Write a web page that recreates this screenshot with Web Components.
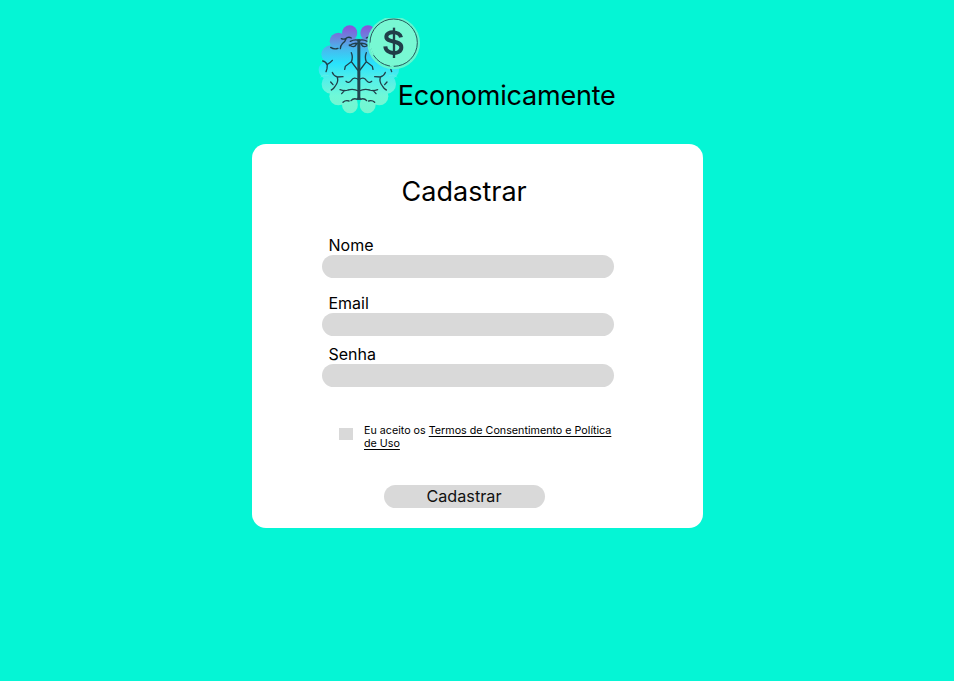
<!DOCTYPE html>
<html lang="pt-BR">
<head>
<meta charset="utf-8">
<title>Economicamente</title>
<style>
html,body{margin:0;height:100%;background:#05f5d5}
body{font-family:Inter,"Liberation Sans",sans-serif;color:#000;overflow:hidden}
</style>
</head>
<body>
<signup-page></signup-page>
<script>
const define = (name, html) => customElements.define(name, class extends HTMLElement {
  constructor() {
    super();
    const t = document.createElement('template');
    t.innerHTML = html;
    this.attachShadow({mode: 'open'}).append(t.content.cloneNode(true));
  }
});

define('brain-logo', `
<style>:host{display:block;width:120px;height:110px}svg{display:block}</style>
<svg width="120" height="110" viewBox="0 0 360 330" aria-hidden="true">
  <defs>
    <linearGradient id="g" gradientUnits="userSpaceOnUse" x1="0" y1="46" x2="0" y2="310">
      <stop offset="0" stop-color="#8b50dc"/><stop offset=".14" stop-color="#6a86dc"/>
      <stop offset=".27" stop-color="#48b9ee"/><stop offset=".43" stop-color="#28e2fc"/>
      <stop offset=".6" stop-color="#50eeea"/><stop offset=".8" stop-color="#70f8d8"/><stop offset="1" stop-color="#74f6cf"/>
    </linearGradient>
    <clipPath id="c"><rect x="160" y="24" width="190" height="170"/></clipPath>
    <g id="lobes">
      <path d="M146 86L120 85L92 98L58 130L52 180L64 220L88 256L120 275L146 268Z"/>
      <ellipse cx="119" cy="69" rx="23" ry="23"/><circle cx="85" cy="94" r="26"/>
      <ellipse cx="63" cy="133" rx="29" ry="27"/><ellipse cx="52" cy="180" rx="26" ry="26"/>
      <ellipse cx="62" cy="222" rx="27" ry="29"/><ellipse cx="85" cy="259" rx="27" ry="27"/>
      <ellipse cx="120" cy="284" rx="24" ry="26"/>
    </g>
    <g id="seams" stroke="#70f7de" stroke-width="2" opacity=".65">
      <path d="M34 150Q39 160 53 162M31 202Q42 191 56 197M57 245Q56 234 69 230M96 281Q95 270 109 263"/>
    </g>
    <g id="folds" stroke="#203e49" stroke-width="4" stroke-linecap="round">
      <path d="M146 91Q134 87 121 94M145 101Q132 97 118 107M118 105Q132 116 139 103M94 86Q102 90 111 83Q118 80 124 84M109 85Q105 97 97 101Q91 107 91 116M62 112Q72 119 84 115"/>
      <path d="M124 128Q130 142 124 155L106 169L104 178M124 155L143 180M38 153Q48 155 51 164M67 151Q61 158 52 163L51 176L48 185"/>
      <path d="M67 187Q70 197 82 201L99 200M82 201Q86 217 75 229Q70 238 64 240M62 216L69 224M108 214Q116 222 124 211Q132 199 146 209M90 239Q104 244 114 240Q130 235 146 243M104 241L95 251M99 277Q106 270 117 273M123 272Q130 263 143 268"/>
    </g>
  </defs>
  <g fill="url(#g)"><use href="#lobes"/><use href="#lobes" transform="translate(293 0) scale(-1 1)"/></g>
  <path d="M146 45V86M146 273V310" stroke="#05f5d5" stroke-width="5"/>
  <g fill="none"><use href="#seams"/><use href="#seams" transform="translate(293 0) scale(-1 1)"/><use href="#folds"/><use href="#folds" transform="translate(293 0) scale(-1 1)"/></g>
  <path d="M142 88H151V262L155 270H139L142 262Z" fill="#204650"/>
  <g clip-path="url(#c)">
    <circle cx="251" cy="99" r="79" fill="#64f5cf"/>
    <circle cx="251" cy="98" r="71" fill="#78f8d3" stroke="#27585c" stroke-width="3"/>
    <path d="M181 98A70 70 0 0 0 190 135M240 167L251 169" fill="none" stroke="#78f8d3" stroke-width="5"/>
  </g>
  <g fill="none" stroke="#203e49">
    <path d="M273 82C270 64 230 61 229 80C228 101 275 88 274 113C273 136 227 134 226 109" stroke-width="12"/>
    <path d="M252 53V144" stroke-width="7"/>
  </g>
</svg>`);

define('brand-header', `
<style>
:host{display:flex;align-items:flex-start;padding:10px 0 0 310px;height:143.5px;box-sizing:border-box}
h1{margin:69px 0 0 -32.3px;font-size:27px;letter-spacing:-.2px;line-height:34px;font-weight:400;white-space:nowrap}
</style>
<brain-logo></brain-logo><h1><slot></slot></h1>`);

define('form-field', `
<style>
:host{display:block;width:292.5px}
label{display:block;padding-left:6.5px;font-size:16px;line-height:20px}
input{display:block;box-sizing:border-box;width:100%;height:23px;border:0;border-radius:12px;background:#d9d9d9;padding:0 12px;outline:0;font:inherit}
</style>
<label for="i"><slot></slot></label><input id="i">`);

define('terms-check', `
<style>
:host{display:flex;gap:11px;font-size:10.72px;line-height:13px}
i{width:14px;height:12px;background:#d9d9d9;margin-top:3.5px;flex:none}
p{margin:0;width:260px}
</style>
<i role="checkbox" aria-checked="false"></i><p><slot></slot></p>`);

define('pill-button', `
<style>
:host{display:block;width:161px}
button{display:block;width:100%;height:23px;border:0;border-radius:12px;padding:0 1px 0 0;background:#d9d9d9;color:#111;font:inherit;font-size:16.2px;line-height:23px}
</style>
<button><slot></slot></button>`);

define('signup-card', `
<style>
:host{display:flex;flex-direction:column;align-items:flex-start;box-sizing:border-box;width:451px;height:384.3px;margin-left:252.4px;border-radius:14px;background:#fff;padding:31.9px 0 0 69.6px}
h2{margin:0 0 0 79.6px;font-size:27px;line-height:34px;font-weight:400}
form-field:nth-of-type(1){margin-top:25.4px}
form-field:nth-of-type(2){margin-top:15.2px}
form-field:nth-of-type(3){margin-top:8px}
terms-check{margin:37.4px 0 0 17px}
pill-button{margin:35.1px 0 0 62px}
u{text-underline-offset:2px;text-decoration-thickness:1px;text-decoration-skip-ink:none}
</style>
<h2>Cadastrar</h2>
<form-field>Nome</form-field><form-field>Email</form-field><form-field>Senha</form-field>
<terms-check>Eu aceito os <u>Termos de Consentimento e Política<br>de Uso</u></terms-check>
<pill-button>Cadastrar</pill-button>`);

define('signup-page', `
<style>:host{display:block;height:681px;background:#05f5d5}</style>
<brand-header>Economicamente</brand-header>
<signup-card></signup-card>`);
</script>
</body>
</html>
